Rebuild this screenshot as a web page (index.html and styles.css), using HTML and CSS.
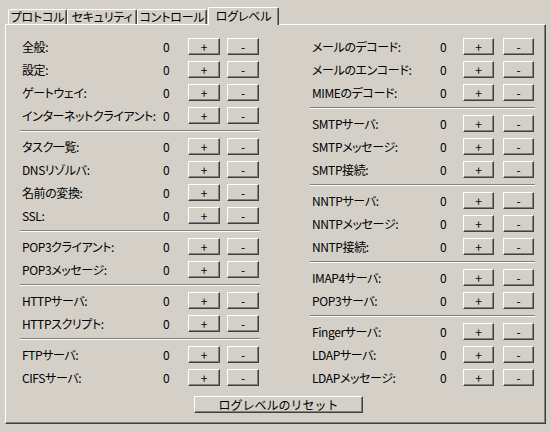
FILE: index.html
```html
<!DOCTYPE html>
<html lang="ja">
<head>
  <meta charset="UTF-8">
  <title>ログレベル</title>
  <link rel="stylesheet" href="styles.css">
</head>
<body>
  <div class="tabs">
    <div class="tab t1">プロトコル</div>
    <div class="tab t2">セキュリティ</div>
    <div class="tab t3">コントロール</div>
    <div class="tab active">ログレベル</div>
  </div>

  <div class="panel">
    <div class="cols">
      <div class="col left">
        <div class="row"><span class="lbl">全般:</span><span class="val">0</span><button>+</button><button>-</button></div>
        <div class="row"><span class="lbl">設定:</span><span class="val">0</span><button>+</button><button>-</button></div>
        <div class="row"><span class="lbl">ゲートウェイ:</span><span class="val">0</span><button>+</button><button>-</button></div>
        <div class="row"><span class="lbl">インターネットクライアント:</span><span class="val">0</span><button>+</button><button>-</button></div>
        <div class="sep"></div>
        <div class="row"><span class="lbl">タスク一覧:</span><span class="val">0</span><button>+</button><button>-</button></div>
        <div class="row"><span class="lbl">DNSリゾルバ:</span><span class="val">0</span><button>+</button><button>-</button></div>
        <div class="row"><span class="lbl">名前の変換:</span><span class="val">0</span><button>+</button><button>-</button></div>
        <div class="row"><span class="lbl">SSL:</span><span class="val">0</span><button>+</button><button>-</button></div>
        <div class="sep"></div>
        <div class="row"><span class="lbl">POP3クライアント:</span><span class="val">0</span><button>+</button><button>-</button></div>
        <div class="row"><span class="lbl">POP3メッセージ:</span><span class="val">0</span><button>+</button><button>-</button></div>
        <div class="sep"></div>
        <div class="row"><span class="lbl">HTTPサーバ:</span><span class="val">0</span><button>+</button><button>-</button></div>
        <div class="row"><span class="lbl">HTTPスクリプト:</span><span class="val">0</span><button>+</button><button>-</button></div>
        <div class="sep"></div>
        <div class="row"><span class="lbl">FTPサーバ:</span><span class="val">0</span><button>+</button><button>-</button></div>
        <div class="row"><span class="lbl">CIFSサーバ:</span><span class="val">0</span><button>+</button><button>-</button></div>
      </div>

      <div class="col right">
        <div class="row"><span class="lbl">メールのデコード:</span><span class="val">0</span><button>+</button><button>-</button></div>
        <div class="row"><span class="lbl">メールのエンコード:</span><span class="val">0</span><button>+</button><button>-</button></div>
        <div class="row"><span class="lbl">MIMEのデコード:</span><span class="val">0</span><button>+</button><button>-</button></div>
        <div class="sep"></div>
        <div class="row"><span class="lbl">SMTPサーバ:</span><span class="val">0</span><button>+</button><button>-</button></div>
        <div class="row"><span class="lbl">SMTPメッセージ:</span><span class="val">0</span><button>+</button><button>-</button></div>
        <div class="row"><span class="lbl">SMTP接続:</span><span class="val">0</span><button>+</button><button>-</button></div>
        <div class="sep"></div>
        <div class="row"><span class="lbl">NNTPサーバ:</span><span class="val">0</span><button>+</button><button>-</button></div>
        <div class="row"><span class="lbl">NNTPメッセージ:</span><span class="val">0</span><button>+</button><button>-</button></div>
        <div class="row"><span class="lbl">NNTP接続:</span><span class="val">0</span><button>+</button><button>-</button></div>
        <div class="sep"></div>
        <div class="row"><span class="lbl">IMAP4サーバ:</span><span class="val">0</span><button>+</button><button>-</button></div>
        <div class="row"><span class="lbl">POP3サーバ:</span><span class="val">0</span><button>+</button><button>-</button></div>
        <div class="sep"></div>
        <div class="row"><span class="lbl">Fingerサーバ:</span><span class="val">0</span><button>+</button><button>-</button></div>
        <div class="row"><span class="lbl">LDAPサーバ:</span><span class="val">0</span><button>+</button><button>-</button></div>
        <div class="row"><span class="lbl">LDAPメッセージ:</span><span class="val">0</span><button>+</button><button>-</button></div>
      </div>
    </div>
    <div class="reset-row"><button class="reset">ログレベルのリセット</button></div>
  </div>
</body>
</html>
```

FILE: styles.css
```css
body { margin: 0; background: #d4d0c8; color: #000; font-family: "Noto Sans CJK JP", sans-serif; font-size: 12px; font-feature-settings: "palt"; }

/* tab strip */
.tabs { display: flex; align-items: flex-end; height: 24px; padding-left: 8px; }
.tab { box-sizing: border-box; height: 15px; line-height: 13px; text-align: center; white-space: nowrap; letter-spacing: -0.2px; border: 1px solid; border-color: #fff #404040 transparent #fff; border-bottom: none; border-radius: 2px 2px 0 0; box-shadow: inset -1px 0 #808080; }
.t1 { width: 59px; }
.t2 { width: 70px; }
.t3 { width: 70px; }
.tab.active { position: relative; z-index: 1; width: 71px; height: 18px; line-height: 15px; margin-left: 1px; margin-bottom: -1px; background: #d4d0c8; }

/* page body */
.panel { box-sizing: border-box; width: 541px; height: 400px; margin-left: 5px; padding: 10px 9px 0 14px; border: 1px solid; border-color: #fff #404040 #404040 #fff; box-shadow: inset -1px -1px #808080; }
.cols { display: flex; gap: 50px; }
.col.left { width: 240px; }
.col.right { width: 225px; }

.row { display: flex; align-items: center; height: 23px; }
.lbl { box-sizing: border-box; padding-left: 2px; white-space: nowrap; letter-spacing: -0.4px; }
.left .lbl { width: 143px; }
.left .val { width: 25px; }
.right .lbl { width: 130px; }
.right .val { width: 23px; }

button { box-sizing: border-box; height: 17px; padding: 0; font-family: inherit; font-size: 12px; line-height: 13px; color: #000; background: #d4d0c8; border: 1px solid; border-color: #fff #404040 #404040 #fff; box-shadow: inset -1px -1px #808080; border-radius: 0; }
.left button { width: 32px; }
.left button + button { margin-left: 7px; }
.right button { width: 31px; }
.right button + button { margin-left: 9px; }

.sep { height: 0; margin: 3px 0; border-top: 1px solid #808080; border-bottom: 1px solid #fff; }

.reset-row { margin-top: 7px; padding-left: 174px; }
.reset { width: 169px; }
```
